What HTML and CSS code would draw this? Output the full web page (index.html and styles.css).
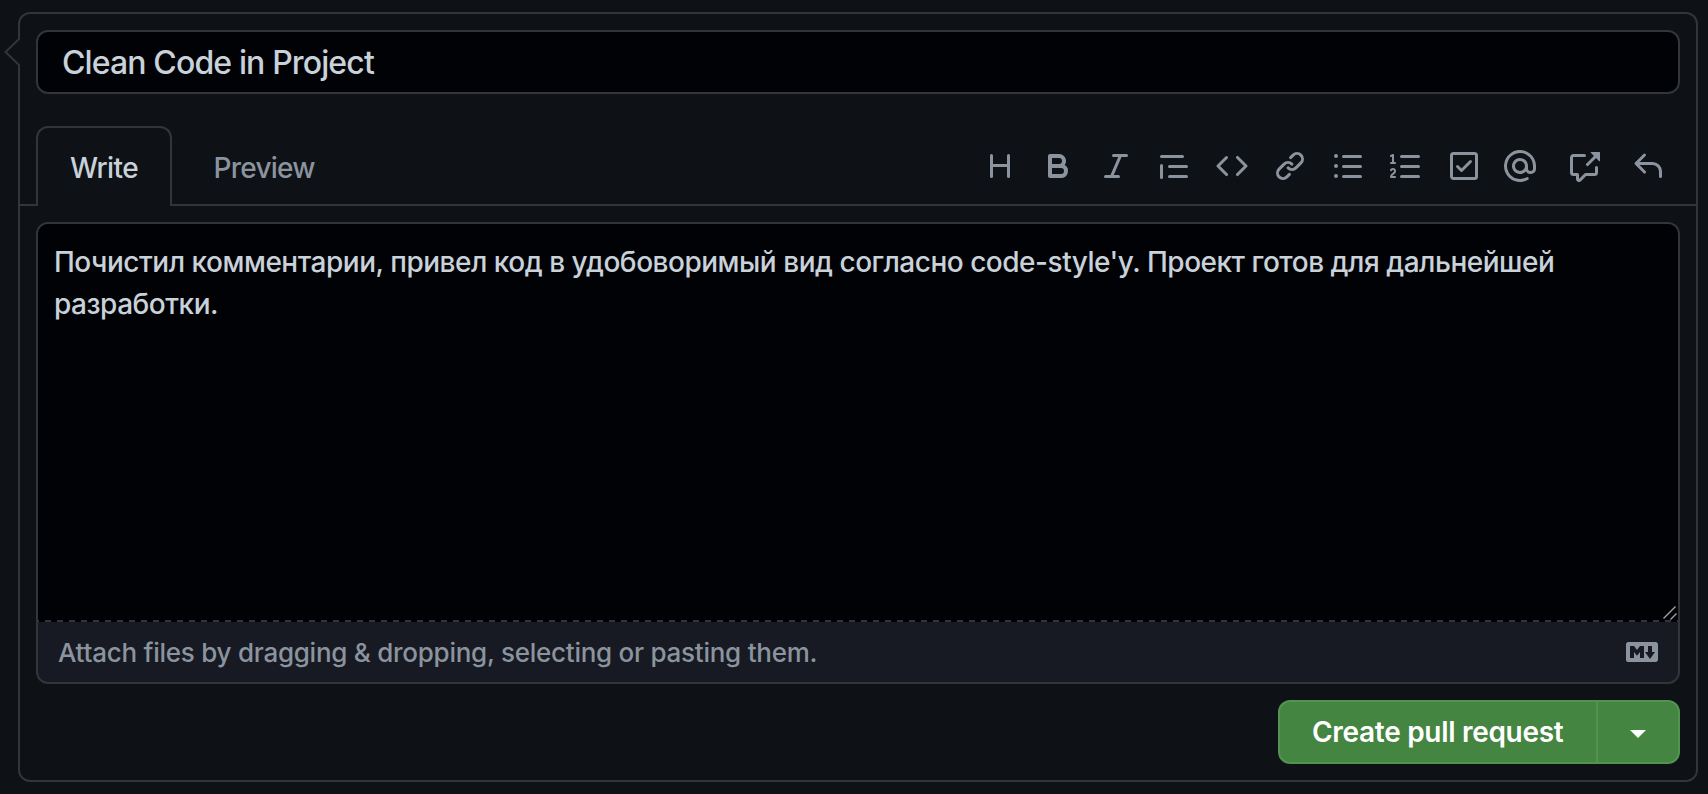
FILE: index.html
```html
<!DOCTYPE html>
<html lang="en">
<head>
<meta charset="utf-8">
<title>Open a pull request</title>
<link rel="stylesheet" href="styles.css">
</head>
<body>
<form class="composer">
  <svg class="caret" width="18" height="28" viewBox="0 0 18 28"><path class="caret-fill" d="M15 1L1.500 14L15 27H16V1z"/><path class="caret-line" d="M15.500 .5L1.500 14L15.500 27.500"/></svg>
  <div class="title-field"><span class="title-text">Clean Code in Project</span></div>
  <div class="tabs">
    <div class="tab tab-active"><span class="write-text">Write</span></div>
    <div class="tab"><span class="preview-text">Preview</span></div>
    <div class="toolbar">
      <svg class="icon" viewBox="0 0 16 16"><path d="M3.75 2a.75.75 0 01.75.75V7h7V2.75a.75.75 0 011.5 0v10.5a.75.75 0 01-1.5 0V8.500h-7v4.750a.75.75 0 01-1.500 0V2.750A.75.75 0 013.750 2z"/></svg>
      <svg class="icon" viewBox="0 0 16 16"><path fill-rule="evenodd" d="M4 2a1 1 0 00-1 1v10a1 1 0 001 1h5.500a3.500 3.500 0 001.852-6.470A3.500 3.500 0 008.500 2H4zm4.500 5a1.500 1.500 0 100-3H5v3h3.500zM5 9v3h4.500a1.500 1.500 0 000-3H5z"/></svg>
      <svg class="icon" viewBox="0 0 16 16"><path d="M6 2.750A.75.75 0 016.750 2h6.500a.75.75 0 010 1.500h-2.505l-3.858 9H9.250a.75.75 0 010 1.500h-6.500a.75.75 0 010-1.500h2.505l3.858-9H6.750A.75.75 0 016 2.750z"/></svg>
      <svg class="icon" viewBox="0 0 16 16"><path d="M1.750 2.500a.75.75 0 000 1.500h10.500a.75.75 0 000-1.500H1.750zm4 5a.75.75 0 000 1.500h8.500a.75.75 0 000-1.500h-8.500zm0 5a.75.75 0 000 1.500h8.500a.75.75 0 000-1.500h-8.500zM2.500 7.750a.75.75 0 00-1.500 0v6a.75.75 0 001.500 0v-6z"/></svg>
      <svg class="icon" viewBox="0 0 16 16"><path d="M4.720 3.220a.75.75 0 011.060 1.060L2.060 8l3.720 3.720a.75.75 0 11-1.060 1.060L.470 8.530a.75.75 0 010-1.060l4.250-4.250zm6.560 0a.75.75 0 10-1.060 1.060L13.940 8l-3.720 3.720a.75.75 0 101.060 1.060l4.250-4.250a.75.75 0 000-1.060l-4.250-4.250z"/></svg>
      <svg class="icon" viewBox="0 0 16 16"><path d="M7.775 3.275a.75.75 0 001.060 1.060l1.250-1.250a2 2 0 112.830 2.830l-2.500 2.500a2 2 0 01-2.830 0 .75.75 0 00-1.060 1.060 3.500 3.500 0 004.950 0l2.500-2.500a3.500 3.500 0 00-4.950-4.950l-1.250 1.250zm-4.690 9.640a2 2 0 010-2.830l2.500-2.500a2 2 0 012.830 0 .75.75 0 001.060-1.060 3.500 3.500 0 00-4.950 0l-2.500 2.500a3.500 3.500 0 004.950 4.950l1.250-1.250a.75.75 0 00-1.060-1.060l-1.250 1.250a2 2 0 01-2.830 0z"/></svg>
      <svg class="icon" viewBox="0 0 16 16"><path d="M2 4a1 1 0 100-2 1 1 0 000 2zm3.750-1.500a.75.75 0 000 1.500h8.500a.75.75 0 000-1.500h-8.500zm0 5a.75.75 0 000 1.500h8.500a.75.75 0 000-1.500h-8.500zm0 5a.75.75 0 000 1.500h8.500a.75.75 0 000-1.500h-8.500zM3 8a1 1 0 11-2 0 1 1 0 012 0zm-1 6a1 1 0 100-2 1 1 0 000 2z"/></svg>
      <svg class="icon" viewBox="0 0 16 16"><path d="M2.003 2.500a.5.5 0 00-.723-.447l-1.003.5a.5.5 0 00.446.895l.28-.14V6H.5a.5.5 0 000 1h2.006a.5.5 0 100-1h-.503V2.500zM5 3.250a.75.75 0 01.75-.75h8.500a.75.75 0 010 1.500h-8.500A.75.75 0 015 3.250zm0 5a.75.75 0 01.75-.75h8.500a.75.75 0 010 1.500h-8.500A.75.75 0 015 8.250zm0 5a.75.75 0 01.75-.75h8.500a.75.75 0 010 1.500h-8.500a.75.75 0 01-.75-.75zM.924 10.320l.003-.004a.851.851 0 01.144-.153A.66.66 0 011.500 10c.195 0 .306.068.374.146a.57.57 0 01.128.376c0 .453-.269.682-.8 1.078l-.035.025C.692 11.980 0 12.495 0 13.500a.5.5 0 00.5.5h2.003a.5.5 0 000-1H1.146c.132-.197.351-.372.654-.597l.047-.035c.47-.35 1.156-.858 1.156-1.845 0-.365-.118-.744-.377-1.038-.268-.303-.658-.484-1.126-.484-.48 0-.84.202-1.068.392a1.858 1.858 0 00-.348.384l-.007.011-.002.004-.001.002-.001.001a.5.5 0 00.851.525z"/></svg>
      <svg class="icon" viewBox="0 0 16 16"><path fill-rule="evenodd" d="M2.500 2.750a.25.25 0 01.25-.25h10.500a.25.25 0 01.25.25v10.500a.25.25 0 01-.25.25H2.750a.25.25 0 01-.25-.25V2.750zM2.750 1A1.750 1.750 0 001 2.750v10.500c0 .966.784 1.750 1.750 1.750h10.500A1.750 1.750 0 0015 13.250V2.750A1.750 1.750 0 0013.250 1H2.750zm9.030 5.280a.75.75 0 00-1.060-1.060L6.750 9.190 5.280 7.720a.75.75 0 00-1.060 1.060l2 2a.75.75 0 001.060 0l4.500-4.500z"/></svg>
      <svg class="icon icon-mention" viewBox="0 0 16 16"><path fill-rule="evenodd" d="M4.750 2.370a6.500 6.500 0 006.500 11.260.75.75 0 01.75 1.298 8 8 0 113.994-7.273.754.754 0 01.006.095v1.500a2.750 2.750 0 01-5.072 1.475A4 4 0 1112 8v1.250a1.250 1.250 0 002.500 0V7.867a6.500 6.500 0 00-9.750-5.496V2.370zM10.500 8a2.500 2.500 0 10-5 0 2.500 2.500 0 005 0z"/></svg>
      <svg class="icon icon-wide" viewBox="0 0 16 16"><path d="M16 1.250v4.146a.25.25 0 01-.427.177L14.030 4.030l-3.750 3.750a.75.75 0 11-1.060-1.060l3.750-3.750-1.543-1.543A.25.25 0 0111.604 1h4.146a.25.25 0 01.25.25zM2.750 3.500a.25.25 0 00-.25.25v7.500c0 .138.112.25.25.25h2a.75.75 0 01.75.75v2.190l2.720-2.720a.75.75 0 01.53-.22h4.500a.25.25 0 00.25-.25v-2.500a.75.75 0 111.500 0v2.500A1.750 1.750 0 0113.250 13H9.060l-2.573 2.573A1.457 1.457 0 014 14.543V13H2.750A1.750 1.750 0 011 11.250v-7.500C1 2.784 1.784 2 2.750 2h5.500a.75.75 0 010 1.500h-5.500z"/></svg>
      <svg class="icon icon-wide" viewBox="0 0 16 16"><path d="M6.780 1.970a.75.75 0 010 1.060L3.810 6h6.440A4.750 4.750 0 0115 10.750v2.500a.75.75 0 01-1.500 0v-2.500a3.250 3.250 0 00-3.250-3.250H3.810l2.970 2.970a.75.75 0 11-1.060 1.060L1.470 7.280a.75.75 0 010-1.060l4.250-4.250a.75.75 0 011.060 0z"/></svg>
    </div>
  </div>
  <div class="editor">
    <div class="body-field">
      <span class="body-text">Почистил комментарии, привел код в удобоворимый вид согласно code-style'у. Проект готов для дальнейшей<br>разработки.</span>
      <svg class="grip" width="14" height="14" viewBox="0 0 14 14"><path d="M.5 12.500L12.500.5M7.500 13.500L13.500 7.500"/></svg>
    </div>
    <div class="attach">
      <span class="attach-text">Attach files by dragging &amp; dropping, selecting or pasting them.</span>
      <svg class="icon" viewBox="0 0 16 16"><path fill-rule="evenodd" d="M14.850 3H1.150C.520 3 0 3.520 0 4.150v7.690C0 12.480.520 13 1.150 13h13.690c.640 0 1.150-.520 1.150-1.150v-7.700C16 3.520 15.480 3 14.850 3zM9 11H7V8L5.500 9.920 4 8v3H2V5h2l1.500 2L7 5h2v6zm2.990.5L9.500 8H11V5h2v3h1.500l-2.510 3.500z"/></svg>
    </div>
  </div>
  <div class="actions">
    <div class="submit"><span class="submit-text">Create pull request</span></div>
    <div class="submit-menu"><span class="triangle"></span></div>
  </div>
</form>
</body>
</html>
```
FILE: styles.css
```css
* { box-sizing: border-box; }

body {
  margin: 0;
  height: 794px;
  padding: 12px 10px 12px 18px;
  overflow: hidden;
  background: #0e1116;
  color: #c9d1d9;
  font-family: Inter, "Liberation Sans", sans-serif;
  font-size: 28px;
  font-weight: 450;
}

.composer {
  position: relative;
  height: 770px;
  border: 2px solid #323539;
  border-radius: 12px;
  padding-top: 16px;
}

.caret { position: absolute; left: -16px; top: 24px; }
.caret-fill { fill: #0e1116; }
.caret-line { fill: none; stroke: #323539; stroke-width: 2; }

.title-field {
  height: 64px;
  margin: 0 16px;
  padding: 0 24px;
  border: 2px solid #323539;
  border-radius: 12px;
  background: #010206;
  font-size: 32px;
  line-height: 61px;
}

.title-text { letter-spacing: -0.87px; }

.tabs {
  display: flex;
  height: 80px;
  margin-top: 32px;
  padding: 0 16px;
  box-shadow: inset 0 -2px #323539;
}

.tab {
  padding: 0 32px;
  border: 2px solid transparent;
  color: #8b949e;
  line-height: 80px;
}

.tab-active {
  width: 136px;
  border-color: #323539;
  border-bottom: 0;
  border-radius: 12px 12px 0 0;
  background: #0e1116;
  color: #c9d1d9;
}

.write-text { letter-spacing: -0.6px; }
.preview-text { margin-left: 7.5px; letter-spacing: -0.75px; }

.toolbar {
  display: flex;
  gap: 26px;
  margin-left: auto;
  padding: 24px 16px 0 0;
}

.icon { width: 32px; height: 32px; flex: none; fill: #8b949e; }
.icon-mention { margin-left: -2px; }
.icon-wide { margin-left: 6px; }

.editor {
  height: 462px;
  margin: 16px 16px 0;
  border: 2px solid #323539;
  border-radius: 12px;
  overflow: hidden;
  background: #171a22;
}

.body-field {
  position: relative;
  height: 398px;
  padding: 17px 16px;
  background: linear-gradient(90deg, #323539 50%, transparent 50%) 7px 100% / 12px 2px repeat-x #010206;
  line-height: 42px;
  white-space: nowrap;
}

.body-text { letter-spacing: -0.485px; }

.grip { position: absolute; right: 1px; bottom: 2px; }
.grip path { fill: none; stroke: #a0a2a4; stroke-width: 1.4; }

.attach {
  display: flex;
  justify-content: space-between;
  align-items: center;
  height: 60px;
  padding: 0 20px;
  color: #8b949e;
  font-size: 26px;
}

.attach-text { letter-spacing: -0.257px; }

.actions {
  display: flex;
  width: 402px;
  height: 64px;
  margin: 16px 16px 0 auto;
  border: 2px solid #549252;
  border-radius: 12px;
  background: #448541;
  color: #fff;
  font-weight: 600;
  line-height: 60px;
}

.submit { width: 318px; padding-left: 32px; border-right: 2px solid #549252; }
.submit-text { letter-spacing: -0.3px; }
.submit-menu { flex: 1; display: flex; align-items: center; justify-content: center; }

.triangle {
  margin-top: 4px;
  border: 8px solid transparent;
  border-top-color: #fff;
  border-bottom: 0;
}
```
